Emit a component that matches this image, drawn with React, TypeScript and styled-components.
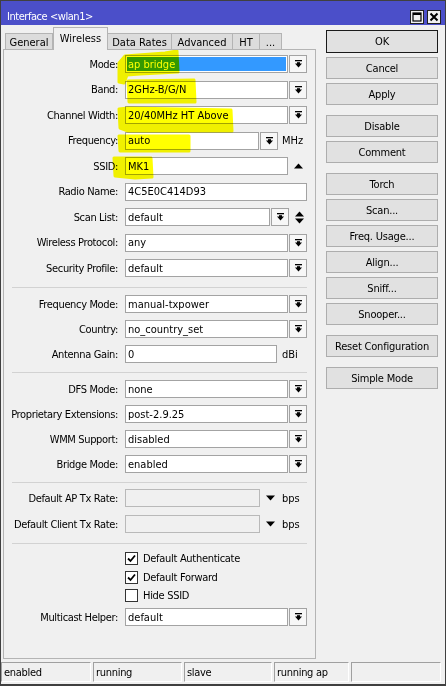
import React from 'react';
import styled, { createGlobalStyle } from 'styled-components';

const GlobalStyle = createGlobalStyle`
  html, body {
    margin: 0;
    padding: 0;
    background: #f0f0f0;
  }
  body {
    font-family: "DejaVu Sans Condensed", "Liberation Sans", sans-serif;
    font-size: 11px;
    color: #000;
  }
`;

const Window = styled.div`
  position: relative;
  box-sizing: border-box;
  width: 446px;
  height: 686px;
  border: 1px solid #404040;
  border-bottom-width: 2px;
  background: #f0f0f0;
  display: flex;
  flex-direction: column;
  overflow: hidden;
`;

const TitleBar = styled.div`
  height: 24px;
  box-sizing: border-box;
  background: #4b4fc9;
  color: #fff;
  display: flex;
  align-items: flex-start;
  padding: 9px 4px 0 6px;
  font-size: 11px;
`;

const TitleText = styled.div`
  flex: 1;
  line-height: 14px;
  letter-spacing: -0.45px;
`;

const TitleButton = styled.div`
  width: 14px;
  height: 14px;
  box-sizing: border-box;
  margin-left: 3px;
  background: #f0f0f0;
  border: 1px solid #202020;
  display: flex;
  align-items: center;
  justify-content: center;
`;

const Body = styled.div`
  flex: 1;
  display: flex;
  padding: 2px 0 0 2px;
  min-height: 0;
`;

const LeftCol = styled.div`
  width: 313px;
  display: flex;
  flex-direction: column;
`;

const TabRow = styled.div`
  height: 23px;
  display: flex;
  align-items: flex-end;
  padding-left: 2px;
  margin-bottom: -1px;
  position: relative;
  z-index: 1;
`;

const Tab = styled.div<{ $w: number; $active?: boolean }>`
  width: ${(p) => p.$w}px;
  height: ${(p) => (p.$active ? 23 : 17)}px;
  box-sizing: border-box;
  border: 1px solid #b4b4b4;
  border-bottom: ${(p) => (p.$active ? 'none' : '1px solid #b4b4b4')};
  border-left-width: ${(p) => (p.$active ? 1 : 0)}px;
  background: ${(p) => (p.$active ? '#f0f0f0' : '#dcdcdc')};
  display: flex;
  align-items: ${(p) => (p.$active ? 'flex-start' : 'center')};
  padding-top: ${(p) => (p.$active ? 4 : 1)}px;
  justify-content: center;
  white-space: nowrap;
  &:first-child {
    border-left-width: 1px;
  }
`;

const Panel = styled.div`
  flex: 1;
  border: 1px solid #b4b4b4;
  padding-top: 5px;
  display: flex;
  flex-direction: column;
`;

const Group = styled.div<{ $gap: number }>`
  display: flex;
  flex-direction: column;
  gap: ${(p) => p.$gap}px;
`;

const Separator = styled.div<{ $top: number; $bottom: number }>`
  height: 1px;
  background: #d2d2d2;
  margin: ${(p) => p.$top}px 0 ${(p) => p.$bottom}px 8px;
  width: 295px;
`;

const Row = styled.div`
  height: 18px;
  display: flex;
  align-items: center;
`;

const Label = styled.div`
  width: 114px;
  margin-right: 7px;
  text-align: right;
  white-space: nowrap;
  letter-spacing: -0.35px;
`;

const Field = styled.div<{ $w: number; $sel?: boolean; $off?: boolean }>`
  width: ${(p) => p.$w}px;
  height: 18px;
  box-sizing: border-box;
  border: 1px solid ${(p) => (p.$off ? '#b9b9b9' : '#a3a3a3')};
  background: ${(p) => (p.$sel ? '#3399ff' : p.$off ? '#f0f0f0' : '#fff')};
  box-shadow: ${(p) => (p.$sel ? 'inset 0 0 0 1px #fff' : 'none')};
  color: ${(p) => (p.$sel ? '#fff' : '#000')};
  padding-left: 2px;
  display: flex;
  align-items: center;
  white-space: nowrap;
  overflow: hidden;
`;

const DropButton = styled.div`
  width: 18px;
  height: 18px;
  box-sizing: border-box;
  margin-left: 1px;
  border: 1px solid #a3a3a3;
  background: #f7f7f7;
  display: flex;
  align-items: center;
  justify-content: center;
`;

const IconSlot = styled.div<{ $w?: number }>`
  width: ${(p) => p.$w ?? 18}px;
  height: 18px;
  display: flex;
  align-items: center;
  justify-content: center;
`;

const Unit = styled.div<{ $ml: number }>`
  margin-left: ${(p) => p.$ml}px;
`;

const CheckGroup = styled.div`
  display: flex;
  flex-direction: column;
  gap: 5.5px;
  margin-bottom: 6px;
`;

const CheckRow = styled.div`
  height: 13px;
  display: flex;
  align-items: center;
  padding-left: 121px;
  letter-spacing: -0.3px;
`;

const Box = styled.div`
  width: 13px;
  height: 13px;
  box-sizing: border-box;
  border: 1px solid #333;
  background: #fff;
  margin-right: 5px;
  display: flex;
  align-items: center;
  justify-content: center;
`;

const RightCol = styled.div`
  width: 112px;
  margin-left: 10px;
  padding-top: 3px;
  display: flex;
  flex-direction: column;
  gap: 4px;
`;

const Button = styled.div<{ $default?: boolean; $gapTop?: boolean }>`
  height: ${(p) => (p.$default ? 23 : 22)}px;
  box-sizing: border-box;
  border: 1px solid ${(p) => (p.$default ? '#1a1a1a' : '#adadad')};
  background: #e1e1e1;
  display: flex;
  align-items: center;
  justify-content: center;
  letter-spacing: -0.2px;
  margin-top: ${(p) => (p.$gapTop ? 6 : 0)}px;
`;

const StatusBar = styled.div`
  display: flex;
  gap: 2px;
  height: 20px;
  margin: 3px 4px 2px 0;
`;

const StatusCell = styled.div<{ $w?: number }>`
  width: ${(p) => (p.$w ? `${p.$w}px` : 'auto')};
  flex: ${(p) => (p.$w ? 'none' : 1)};
  box-sizing: border-box;
  border: 1px solid #a0a0a0;
  border-right-color: #fff;
  border-bottom-color: #fff;
  padding-left: 2px;
  display: flex;
  align-items: center;
  letter-spacing: -0.3px;
`;

const Highlights = styled.svg`
  position: absolute;
  top: -1px;
  left: -1px;
  width: 446px;
  height: 686px;
  pointer-events: none;
  mix-blend-mode: multiply;
`;

const DropIcon = () => (
  <svg width="7" height="8" viewBox="0 0 7 8">
    <rect x="0" y="0" width="7" height="1.3" fill="#000" />
    <rect x="2" y="2.2" width="3" height="2" fill="#000" />
    <polygon points="0,3.6 7,3.6 3.5,7.6" fill="#000" />
  </svg>
);

const UpIcon = () => (
  <svg width="9" height="6" viewBox="0 0 9 6">
    <polygon points="0,5.5 9,5.5 4.5,0.5" fill="#000" />
  </svg>
);

const DownIcon = () => (
  <svg width="9" height="6" viewBox="0 0 9 6">
    <polygon points="0,0.5 9,0.5 4.5,5.5" fill="#000" />
  </svg>
);

const UpDownIcon = () => (
  <svg width="9" height="13" viewBox="0 0 9 13">
    <polygon points="0,5.5 9,5.5 4.5,0.5" fill="#000" />
    <polygon points="0,7.5 9,7.5 4.5,12.5" fill="#000" />
  </svg>
);

const CheckMark = () => (
  <svg width="9" height="9" viewBox="0 0 9 9">
    <polyline points="1,4.5 3.5,7 8,1.5" fill="none" stroke="#000" strokeWidth="1.8" />
  </svg>
);

type Sel = { label: string; value: string; sel?: boolean };

const SelectRow = ({ label, value, sel }: Sel) => (
  <Row>
    <Label>{label}</Label>
    <Field $w={163} $sel={sel}>{value}</Field>
    <DropButton><DropIcon /></DropButton>
  </Row>
);

const Check = ({ label, on }: { label: string; on?: boolean }) => (
  <CheckRow>
    <Box>{on && <CheckMark />}</Box>
    {label}
  </CheckRow>
);

const buttons: [string, boolean?, boolean?][] = [
  ['OK', true],
  ['Cancel'],
  ['Apply'],
  ['Disable', false, true],
  ['Comment'],
  ['Torch', false, true],
  ['Scan...'],
  ['Freq. Usage...'],
  ['Align...'],
  ['Sniff...'],
  ['Snooper...'],
  ['Reset Configuration', false, true],
  ['Simple Mode', false, true],
];

const App = () => {
  return (
    <Window>
      <GlobalStyle />
      <TitleBar>
        <TitleText>Interface &lt;wlan1&gt;</TitleText>
        <TitleButton>
          <svg width="10" height="10" viewBox="0 0 10 10">
            <rect x="1" y="1" width="8" height="8" fill="none" stroke="#000" strokeWidth="1.2" />
            <rect x="1" y="1" width="8" height="2" fill="#000" />
          </svg>
        </TitleButton>
        <TitleButton>
          <svg width="10" height="10" viewBox="0 0 10 10">
            <path d="M1.5 1.5 L8.5 8.5 M8.5 1.5 L1.5 8.5" stroke="#000" strokeWidth="2" />
          </svg>
        </TitleButton>
      </TitleBar>

      <Body>
        <LeftCol>
          <TabRow>
            <Tab $w={48}>General</Tab>
            <Tab $w={55} $active>Wireless</Tab>
            <Tab $w={64}>Data Rates</Tab>
            <Tab $w={61}>Advanced</Tab>
            <Tab $w={27}>HT</Tab>
            <Tab $w={22}>...</Tab>
          </TabRow>
          <Panel>
            <Group $gap={7.5}>
              <SelectRow label="Mode:" value="ap bridge" sel />
              <SelectRow label="Band:" value="2GHz-B/G/N" />
              <SelectRow label="Channel Width:" value="20/40MHz HT Above" />
              <Row>
                <Label>Frequency:</Label>
                <Field $w={134}>auto</Field>
                <DropButton><DropIcon /></DropButton>
                <Unit $ml={4}>MHz</Unit>
              </Row>
              <Row>
                <Label>SSID:</Label>
                <Field $w={163}>MK1</Field>
                <IconSlot $w={20}><UpIcon /></IconSlot>
              </Row>
              <Row>
                <Label>Radio Name:</Label>
                <Field $w={182}>4C5E0C414D93</Field>
              </Row>
              <Row>
                <Label>Scan List:</Label>
                <Field $w={145}>default</Field>
                <DropButton><DropIcon /></DropButton>
                <IconSlot $w={20}><UpDownIcon /></IconSlot>
              </Row>
              <SelectRow label="Wireless Protocol:" value="any" />
              <SelectRow label="Security Profile:" value="default" />
            </Group>
            <Separator $top={10} $bottom={7} />
            <Group $gap={7}>
              <SelectRow label="Frequency Mode:" value="manual-txpower" />
              <SelectRow label="Country:" value="no_country_set" />
              <Row>
                <Label>Antenna Gain:</Label>
                <Field $w={152}>0</Field>
                <Unit $ml={5}>dBi</Unit>
              </Row>
            </Group>
            <Separator $top={9} $bottom={7} />
            <Group $gap={7}>
              <SelectRow label="DFS Mode:" value="none" />
              <SelectRow label="Proprietary Extensions:" value="post-2.9.25" />
              <SelectRow label="WMM Support:" value="disabled" />
              <SelectRow label="Bridge Mode:" value="enabled" />
            </Group>
            <Separator $top={9} $bottom={6} />
            <Group $gap={8}>
              <Row>
                <Label>Default AP Tx Rate:</Label>
                <Field $w={135} $off />
                <IconSlot $w={20}><DownIcon /></IconSlot>
                <Unit $ml={2}>bps</Unit>
              </Row>
              <Row>
                <Label>Default Client Tx Rate:</Label>
                <Field $w={135} $off />
                <IconSlot $w={20}><DownIcon /></IconSlot>
                <Unit $ml={2}>bps</Unit>
              </Row>
            </Group>
            <Separator $top={10} $bottom={8} />
            <CheckGroup>
              <Check label="Default Authenticate" on />
              <Check label="Default Forward" on />
              <Check label="Hide SSID" />
            </CheckGroup>
            <SelectRow label="Multicast Helper:" value="default" />
          </Panel>
        </LeftCol>

        <RightCol>
          {buttons.map(([text, def, gap]) => (
            <Button key={text} $default={def} $gapTop={gap}>{text}</Button>
          ))}
        </RightCol>
      </Body>

      <StatusBar>
        <StatusCell $w={90}>enabled</StatusCell>
        <StatusCell $w={89}>running</StatusCell>
        <StatusCell $w={88}>slave</StatusCell>
        <StatusCell $w={75}>running ap</StatusCell>
        <StatusCell />
      </StatusBar>

      <Highlights viewBox="0 0 446 686">
        <g fill="#ffff00" stroke="#ffff00" strokeWidth="3" strokeLinejoin="round">
          <path d="M119,63 L125,56 L165,53 L177,51 L178,72 L140,74 L127,75 L124,83 L119,82 Z" />
          <path d="M128,81 L194,80 L195,102 L129,102 Z" />
          <path d="M119,109 L128,108 L231,110 L232,131 L128,131 L120,128 Z" />
          <path d="M119,136 L189,136 L189,151 L120,151 Z" />
          <path d="M114,158 L151,158 L152,177 L135,178 L115,176 Z" />
        </g>
      </Highlights>
    </Window>
  );
};

export default App;
